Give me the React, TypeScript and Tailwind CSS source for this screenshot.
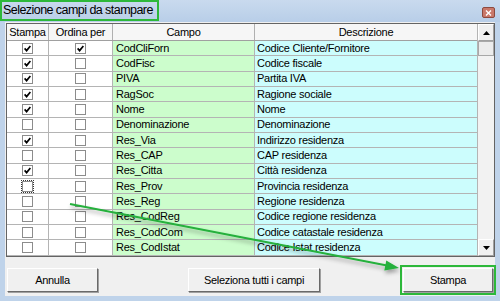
import React from "react";

type Row = { campo: string; desc: string; stampa: boolean; ordina: boolean; focus?: boolean };

const rows: Row[] = [
  { campo: "CodCliForn", desc: "Codice Cliente/Fornitore", stampa: true, ordina: true },
  { campo: "CodFisc", desc: "Codice fiscale", stampa: true, ordina: false },
  { campo: "PIVA", desc: "Partita IVA", stampa: true, ordina: false },
  { campo: "RagSoc", desc: "Ragione sociale", stampa: true, ordina: false },
  { campo: "Nome", desc: "Nome", stampa: true, ordina: false },
  { campo: "Denominazione", desc: "Denominazione", stampa: false, ordina: false },
  { campo: "Res_Via", desc: "Indirizzo residenza", stampa: true, ordina: false },
  { campo: "Res_CAP", desc: "CAP residenza", stampa: false, ordina: false },
  { campo: "Res_Citta", desc: "Città residenza", stampa: true, ordina: false },
  { campo: "Res_Prov", desc: "Provincia residenza", stampa: false, ordina: false, focus: true },
  { campo: "Res_Reg", desc: "Regione residenza", stampa: false, ordina: false },
  { campo: "Res_CodReg", desc: "Codice regione residenza", stampa: false, ordina: false },
  { campo: "Res_CodCom", desc: "Codice catastale residenza", stampa: false, ordina: false },
  { campo: "Res_CodIstat", desc: "Codice Istat residenza", stampa: false, ordina: false },
];

function Check({ checked, focus }: { checked: boolean; focus?: boolean }) {
  const box = (
    <span className="flex h-[11px] w-[11px] items-center justify-center border border-[#8c8c8c] bg-white">
      {checked && (
        <svg width="7" height="7" viewBox="0 0 7 7">
          <path d="M0.6 3.4 L2.6 5.6 L6.4 1" stroke="#000" strokeWidth="1.7" fill="none" />
        </svg>
      )}
    </span>
  );
  if (focus) {
    return <span className="flex border border-dotted border-[#333] p-0">{box}</span>;
  }
  return box;
}

function Btn({ label, w, green }: { label: string; w: string; green?: boolean }) {
  return (
    <div
      className={`flex h-[24px] items-center justify-center border border-t-[#ffffff] border-l-[#ffffff] border-r-[#696969] border-b-[#696969] bg-[#f0f0f0] shadow-[1px_1px_0_#a0a0a0] ${w} ${
        green ? "outline outline-2 outline-[#2db83a] outline-offset-[1px]" : ""
      }`}
    >
      <span className="text-[11px] tracking-[-0.3px] text-black">{label}</span>
    </div>
  );
}

export default function App() {
  const font = { fontFamily: '"Liberation Sans", Arial, sans-serif' };
  return (
    <div className="relative h-[301px] w-[500px] overflow-hidden bg-[#bfd3ea]" style={font}>
      {/* Title bar */}
      <div className="flex h-[22px] items-start bg-gradient-to-b from-[#c9daee] to-[#b8cee8]">
        <div className="flex h-[21px] w-[159px] items-center border-2 border-[#2db83a] pl-[1px]">
          <span className="text-[12.5px] leading-none tracking-[-0.55px] text-black">Selezione campi da stampare</span>
        </div>
        <div className="ml-auto mr-[5px] mt-[7px] flex h-[11px] w-[13px] items-center justify-center rounded-[2px] border border-[#8d4a3f] bg-[#c9786a]">
          <svg width="7" height="6" viewBox="0 0 7 6">
            <path d="M1 0.5 L6 5.5 M6 0.5 L1 5.5" stroke="#fff" strokeWidth="1.4" />
          </svg>
        </div>
      </div>

      {/* Client area */}
      <div className="mx-[5px] flex h-[274px] flex-col bg-[#f0f0f0] pl-[1px] pt-[1px]">
        {/* Grid */}
        <div className="flex h-[234px] w-[489px] border border-[#646464] bg-white">
          <div className="flex w-[470px] flex-col">
            {/* Header */}
            <div className="flex h-[17px] border-b border-[#a0a0a0] bg-[#f6f6f6] text-[11px] tracking-[-0.25px] text-black">
              <div className="flex w-[42px] items-center justify-center border-r border-[#b0b0b0]">Stampa</div>
              <div className="flex w-[64px] items-center justify-center border-r border-[#b0b0b0]">Ordina per</div>
              <div className="flex w-[142px] items-center justify-center border-r border-[#b0b0b0]">Campo</div>
              <div className="flex w-[222px] items-center justify-center">Descrizione</div>
            </div>
            {rows.map((r) => (
              <div
                key={r.campo}
                className="flex h-[15.33px] border-b border-[#b4b4b4] text-[11px] leading-none tracking-[-0.25px] text-black"
              >
                <div className="flex w-[42px] items-center justify-center border-r border-[#b4b4b4] bg-white">
                  <Check checked={r.stampa} focus={r.focus} />
                </div>
                <div className="flex w-[64px] items-center justify-center border-r border-[#b4b4b4] bg-white">
                  <Check checked={r.ordina} />
                </div>
                <div className="flex w-[142px] items-center border-r border-[#b4b4b4] bg-[#ccfdcc] pl-[3px]">
                  {r.campo}
                </div>
                <div className="flex w-[222px] items-center bg-[#ccfdfd] pl-[2px]">{r.desc}</div>
              </div>
            ))}
          </div>
          {/* Scrollbar */}
          <div className="flex w-[17px] flex-col border-l border-[#b4b4b4] bg-[#f2f2f2]">
            <div className="flex h-[17px] items-center justify-center border border-t-white border-l-white border-r-[#a0a0a0] border-b-[#a0a0a0] bg-[#f0f0f0]">
              <svg width="7" height="4" viewBox="0 0 7 4">
                <path d="M3.5 0 L7 4 L0 4 Z" fill="#000" />
              </svg>
            </div>
            <div className="h-[15px] border border-[#a8a8a8] bg-[#ececec]" />
            <div className="flex-1" />
            <div className="flex h-[17px] items-center justify-center border border-t-white border-l-white border-r-[#a0a0a0] border-b-[#a0a0a0] bg-[#f0f0f0]">
              <svg width="7" height="4" viewBox="0 0 7 4">
                <path d="M0 0 L7 0 L3.5 4 Z" fill="#000" />
              </svg>
            </div>
          </div>
        </div>

        {/* Buttons */}
        <div className="mt-[11px] flex pl-[1px]">
          <Btn label="Annulla" w="w-[91px]" />
          <div className="ml-[90px]">
            <Btn label="Seleziona tutti i campi" w="w-[132px]" />
          </div>
          <div className="ml-[83px]">
            <Btn label="Stampa" w="w-[90px]" green />
          </div>
        </div>
      </div>

      {/* Annotation arrow */}
      <svg className="pointer-events-none absolute left-0 top-0" width="500" height="301" viewBox="0 0 500 301">
        <defs>
          <filter id="sh" x="-10%" y="-50%" width="120%" height="200%">
            <feDropShadow dx="1" dy="3" stdDeviation="2" floodColor="#000" floodOpacity="0.35" />
          </filter>
        </defs>
        <g filter="url(#sh)">
          <line x1="70" y1="204" x2="387" y2="265.6" stroke="#25b03c" strokeWidth="2" />
          <polygon points="399,268 384.3,270.6 386.3,260.4" fill="#25b03c" />
        </g>
      </svg>
    </div>
  );
}
